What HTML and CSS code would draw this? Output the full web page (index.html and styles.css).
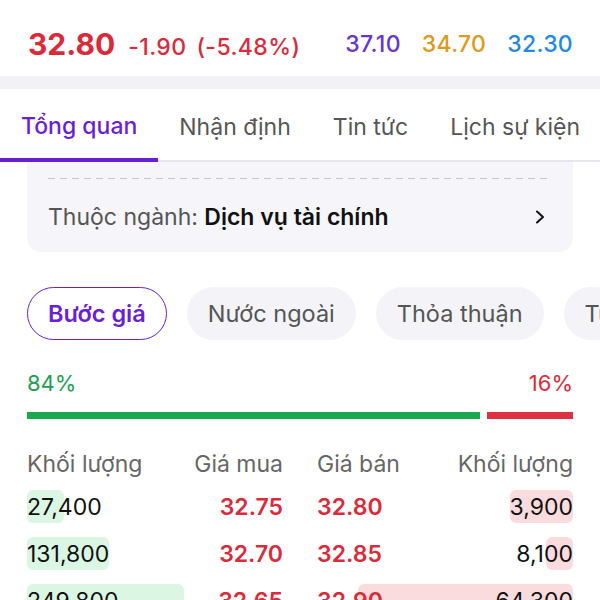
FILE: index.html
```html
<!DOCTYPE html>
<html lang="vi">
<head>
  <meta charset="UTF-8">
  <title>Bảng giá</title>
  <link rel="stylesheet" href="styles.css">
</head>
<body>

  <header class="quote">
    <div class="quote-main">
      <span class="price">32.80</span>
      <span class="change">-1.90</span>
      <span class="change">(-5.48%)</span>
    </div>
    <div class="quote-refs">
      <span class="ceil">37.10</span>
      <span class="ref">34.70</span>
      <span class="floor">32.30</span>
    </div>
  </header>

  <div class="spacer"></div>

  <nav class="tabs">
    <a class="tab active" href="#">Tổng quan</a>
    <a class="tab" href="#">Nhận định</a>
    <a class="tab" href="#">Tin tức</a>
    <a class="tab" href="#">Lịch sự kiện</a>
  </nav>

  <main>
    <section class="card">
      <div class="dash"></div>
      <div class="sector">
        <span>Thuộc ngành: <b>Dịch vụ tài chính</b></span>
        <svg width="16" height="16" viewBox="0 0 16 16"><path d="M5 2.5l6 5.5-6 5.5" fill="none" stroke="#111" stroke-width="2" stroke-linecap="round" stroke-linejoin="round"/></svg>
      </div>
    </section>

    <div class="pills">
      <span class="pill active">Bước giá</span>
      <span class="pill">Nước ngoài</span>
      <span class="pill">Thỏa thuận</span>
      <span class="pill">Tự doanh</span>
    </div>

    <div class="ratio">
      <span class="buy-pct">84%</span>
      <span class="sell-pct">16%</span>
    </div>
    <div class="ratio-bar">
      <div class="bar-buy" style="flex: 84"></div>
      <div class="bar-sell" style="flex: 16"></div>
    </div>

    <div class="book">
      <div class="book-head">
        <div class="half">
          <span>Khối lượng</span>
          <span>Giá mua</span>
        </div>
        <div class="half">
          <span>Giá bán</span>
          <span>Khối lượng</span>
        </div>
      </div>

      <div class="book-row">
        <div class="half bid">
          <i class="vol-bar" style="width: 37px"></i>
          <span class="vol">27,400</span>
          <span class="px">32.75</span>
        </div>
        <div class="half ask">
          <i class="vol-bar" style="width: 63px"></i>
          <span class="px">32.80</span>
          <span class="vol">3,900</span>
        </div>
      </div>

      <div class="book-row">
        <div class="half bid">
          <i class="vol-bar" style="width: 82px"></i>
          <span class="vol">131,800</span>
          <span class="px">32.70</span>
        </div>
        <div class="half ask">
          <i class="vol-bar" style="width: 27px"></i>
          <span class="px">32.85</span>
          <span class="vol">8,100</span>
        </div>
      </div>

      <div class="book-row">
        <div class="half bid">
          <i class="vol-bar" style="width: 157px"></i>
          <span class="vol">249,800</span>
          <span class="px">32.65</span>
        </div>
        <div class="half ask">
          <i class="vol-bar" style="width: 215px"></i>
          <span class="px">32.90</span>
          <span class="vol">64,300</span>
        </div>
      </div>
    </div>
  </main>

</body>
</html>
```

FILE: styles.css
```css
body {
  font-family: Inter, "Noto Sans", sans-serif;
  margin: 0;
  background-color: #fff;
  color: #111;
  width: 600px;
  height: 600px;
  overflow: hidden;
}
.quote {
  height: 76px;
  box-sizing: border-box;
  padding: 12px 27px 0 28px;
  display: flex;
  align-items: center;
  justify-content: space-between;
}
.quote-main {
  display: flex;
  align-items: baseline;
  gap: 13px;
}
.price {
  font-size: 30px;
  font-weight: 700;
  color: #d92b3a;
}
.change {
  font-size: 23px;
  font-weight: 500;
  letter-spacing: 0.4px;
  color: #d92b3a;
}
.change + .change {
  margin-left: -3px;
}
.quote-refs {
  display: flex;
  gap: 21px;
  font-size: 23px;
  font-weight: 500;
  letter-spacing: 0.3px;
}
.ceil { color: #6536d6; }
.ref { color: #dc9a20; }
.floor { color: #1f8ae6; }
.spacer {
  height: 13px;
  background-color: #f2f2f4;
}
.tabs {
  display: flex;
  height: 71px;
  border-bottom: 2px solid #e7e6ee;
}
.tab {
  display: flex;
  align-items: center;
  padding: 4px 21px 0;
  font-size: 23px;
  color: #555;
  text-decoration: none;
  white-space: nowrap;
}
.tab.active {
  color: #6a1fd6;
  font-weight: 500;
  border-bottom: 4px solid #6a1fd6;
  margin-bottom: -2px;
}
main {
  padding: 0 27px;
}
.card {
  background-color: #f6f5fa;
  border-radius: 0 0 14px 14px;
  padding: 16px 21px 0;
  height: 74px;
}
.dash {
  height: 1px;
  background-image: linear-gradient(to right, #c6c6cc 60%, transparent 60%);
  background-size: 12px 1px;
}
.sector {
  height: 76px;
  display: flex;
  align-items: center;
  justify-content: space-between;
  font-size: 23px;
  color: #555;
  padding-right: 4px;
}
.sector b {
  color: #111;
  font-weight: 600;
}
.pills {
  display: flex;
  gap: 20px;
  margin-top: 35px;
  white-space: nowrap;
}
.pill {
  height: 53px;
  box-sizing: border-box;
  display: flex;
  align-items: center;
  padding: 0 21px;
  border-radius: 27px;
  background-color: #f4f3f8;
  font-size: 23.5px;
  color: #555;
}
.pill.active {
  background-color: #fff;
  border: 1.5px solid #6a1fd6;
  color: #6a1fd6;
  font-weight: 600;
  padding: 0 20px;
}
.ratio {
  display: flex;
  justify-content: space-between;
  margin-top: 30px;
  font-size: 22px;
}
.buy-pct { color: #1ba052; }
.sell-pct { color: #d92b3a; }
.ratio-bar {
  display: flex;
  gap: 7px;
  height: 7px;
  margin-top: 16px;
}
.bar-buy { background-color: #19a94f; }
.bar-sell { background-color: #dd3040; }
.book {
  margin-top: 29px;
}
.book-head,
.book-row {
  display: flex;
  gap: 34px;
}
.half {
  flex: 1;
  display: flex;
  justify-content: space-between;
  align-items: center;
  position: relative;
}
.book-head {
  font-size: 23px;
  color: #666;
  height: 32px;
  margin-bottom: 10px;
}
.book-row {
  height: 33px;
  margin-bottom: 14px;
  font-size: 23px;
}
.vol, .px {
  position: relative;
}
.px {
  color: #d92b3a;
  font-weight: 600;
}
.vol-bar {
  position: absolute;
  top: 0;
  bottom: 0;
  border-radius: 6px;
}
.bid .vol-bar {
  left: 0;
  background-color: #dbf7e3;
}
.ask .vol-bar {
  right: 0;
  background-color: #fadcdf;
}
```
